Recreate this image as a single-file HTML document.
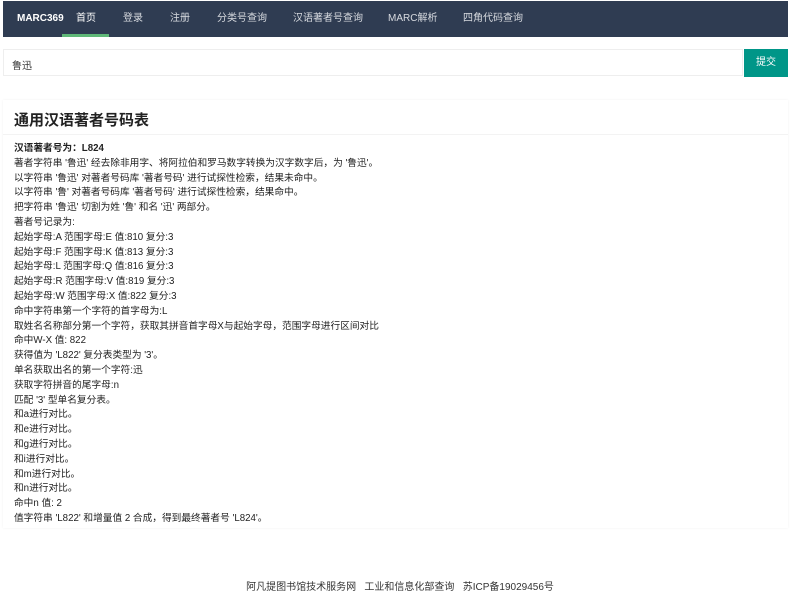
<!DOCTYPE html>
<html><head><meta charset="utf-8"><style>
body{margin:0;background:#fff;font-family:"Liberation Sans","Noto Sans CJK SC",sans-serif;color:#333;}
.nav{position:absolute;left:3px;top:1px;width:785px;height:36px;background:#2f3c52;}
.nav span{position:absolute;top:0;line-height:36px;font-size:10px;color:#d8dbe0;white-space:nowrap;}
.nav .logo{color:#fff;font-weight:bold;left:14px;}
.ul{position:absolute;left:59px;top:33px;width:47px;height:3px;background:#5fb878;}
.inp{position:absolute;left:3px;top:49px;width:740px;height:27px;border:1px solid #eee;box-sizing:border-box;font-size:10px;padding:7px 8px;}
.btn{position:absolute;left:744px;top:49px;width:44px;height:28px;background:#009688;color:#fff;font-size:10px;text-align:center;line-height:28px;}
.card{position:absolute;left:3px;top:100px;width:785px;height:428px;box-shadow:0 0 2px rgba(0,0,0,.06);}
.card h1{margin:0;position:absolute;left:11px;top:9px;font-size:15px;font-weight:bold;color:#222;}
.sep{position:absolute;left:0;top:34px;width:785px;height:1px;background:#f3f3f3;}
.body{position:absolute;left:11px;top:42px;font-size:9.7px;line-height:14.8px;color:#222;white-space:nowrap;}
.ft{position:absolute;top:578px;width:800px;text-align:center;font-size:10px;color:#333;}
</style></head><body>
<div class="nav">
<span class="logo">MARC369</span>
<span style="left:73px;color:#fff">首页</span>
<span style="left:120px">登录</span>
<span style="left:167px">注册</span>
<span style="left:214px">分类号查询</span>
<span style="left:290px">汉语著者号查询</span>
<span style="left:385px">MARC解析</span>
<span style="left:460px">四角代码查询</span>
<div class="ul"></div>
</div>
<div class="inp">鲁迅</div>
<div class="btn">提交</div>
<div class="card">
<h1>通用汉语著者号码表</h1>
<div class="sep"></div>
<div class="body">
<b>汉语著者号为：L824</b><br>
著者字符串 '鲁迅' 经去除非用字、将阿拉伯和罗马数字转换为汉字数字后，为 '鲁迅'。<br>
以字符串 '鲁迅' 对著者号码库 '著者号码' 进行试探性检索，结果未命中。<br>
以字符串 '鲁' 对著者号码库 '著者号码' 进行试探性检索，结果命中。<br>
把字符串 '鲁迅' 切割为姓 '鲁' 和名 '迅' 两部分。<br>
著者号记录为:<br>
起始字母:A 范围字母:E 值:810 复分:3<br>
起始字母:F 范围字母:K 值:813 复分:3<br>
起始字母:L 范围字母:Q 值:816 复分:3<br>
起始字母:R 范围字母:V 值:819 复分:3<br>
起始字母:W 范围字母:X 值:822 复分:3<br>
命中字符串第一个字符的首字母为:L<br>
取姓名名称部分第一个字符，获取其拼音首字母X与起始字母，范围字母进行区间对比<br>
命中W-X 值: 822<br>
获得值为 'L822' 复分表类型为 '3'。<br>
单名获取出名的第一个字符:迅<br>
获取字符拼音的尾字母:n<br>
匹配 '3' 型单名复分表。<br>
和a进行对比。<br>
和e进行对比。<br>
和g进行对比。<br>
和i进行对比。<br>
和m进行对比。<br>
和n进行对比。<br>
命中n 值: 2<br>
值字符串 'L822' 和增量值 2 合成，得到最终著者号 'L824'。
</div>
</div>
<div class="ft">阿凡提图书馆技术服务网&nbsp;&nbsp;&nbsp;工业和信息化部查询&nbsp;&nbsp;&nbsp;苏ICP备19029456号</div>
</body></html>
